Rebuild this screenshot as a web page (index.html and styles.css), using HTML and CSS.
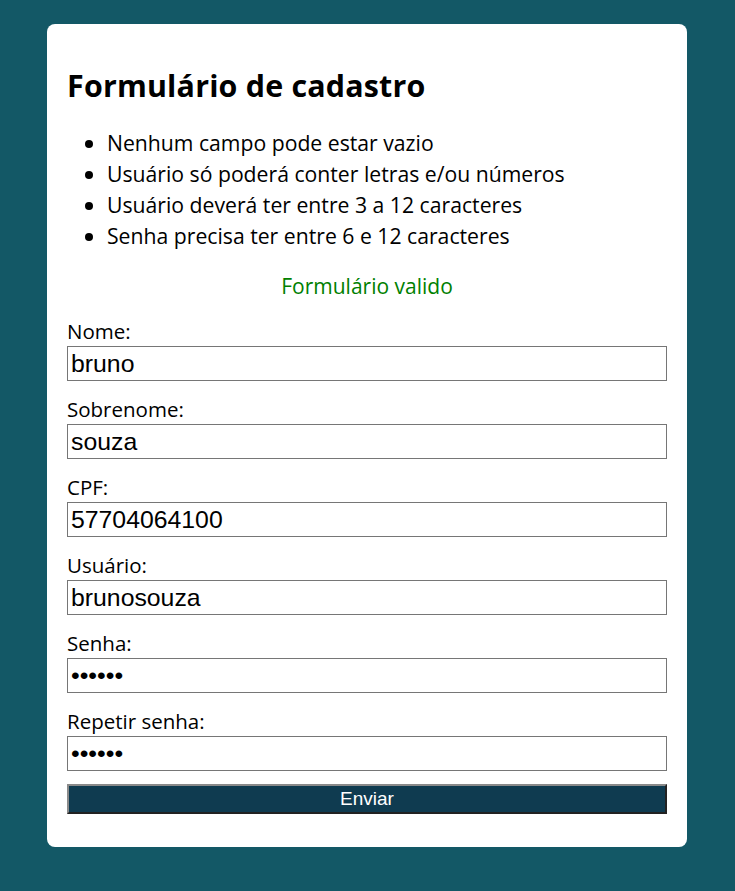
FILE: index.html
```html
<!DOCTYPE html>
<html lang="pt-BR">
<head>
<meta charset="utf-8">
<title>Formulário de cadastro</title>
<link rel="stylesheet" href="styles.css">
</head>
<body>
<main class="card">
  <h1 class="title">Formulário de cadastro</h1>
  <ul class="rules">
    <li>Nenhum campo pode estar vazio</li>
    <li>Usuário só poderá conter letras e/ou números</li>
    <li>Usuário deverá ter entre 3 a 12 caracteres</li>
    <li>Senha precisa ter entre 6 e 12 caracteres</li>
  </ul>
  <p class="status">Formulário valido</p>
  <form class="form">
    <div class="field">
      <label for="nome">Nome:</label>
      <input id="nome" type="text" value="bruno">
    </div>
    <div class="field">
      <label for="sobrenome">Sobrenome:</label>
      <input id="sobrenome" type="text" value="souza">
    </div>
    <div class="field">
      <label for="cpf">CPF:</label>
      <input id="cpf" type="text" value="57704064100">
    </div>
    <div class="field">
      <label for="usuario">Usuário:</label>
      <input id="usuario" type="text" value="brunosouza">
    </div>
    <div class="field">
      <label for="senha">Senha:</label>
      <input id="senha" type="password" value="123456">
    </div>
    <div class="field">
      <label for="senha2">Repetir senha:</label>
      <input id="senha2" type="password" value="123456">
    </div>
    <button type="button" class="submit">Enviar</button>
  </form>
</main>
</body>
</html>
```
FILE: styles.css
```css
html, body {
  margin: 0;
  padding: 0;
}
body {
  background: #135866;
  font-family: "Open Sans", "Noto Sans", sans-serif;
  color: #000;
  padding: 24px 48px 45px 47px;
}
.card {
  background: #fff;
  border-radius: 8px;
  padding: 28px 20px 33px;
}
.title {
  font-size: 30.4px;
  font-weight: 700;
  margin: 15px 0 22px;
  line-height: 38px;
  letter-spacing: 0.2px;
}
.rules {
  margin: 0;
  padding-left: 40px;
  font-size: 21.2px;
  line-height: 31px;
}
.status {
  text-align: center;
  color: #008000;
  font-size: 21px;
  line-height: 27px;
  margin: 22px 0 18px;
}
.form {
  display: flex;
  flex-direction: column;
}
.field {
  display: flex;
  flex-direction: column;
  margin-bottom: 15px;
}
.field label {
  font-size: 20.5px;
  line-height: 27px;
  margin-bottom: 1px;
}
.field input {
  box-sizing: border-box;
  width: 100%;
  height: 35px;
  border: 1px solid #767676;
  padding: 1px 3px;
  font-family: "Liberation Sans", Arial, sans-serif;
  font-size: 24.8px;
  color: #000;
  margin: 0;
}
.submit {
  box-sizing: border-box;
  width: 100%;
  height: 30px;
  margin-top: -2px;
  background: #0f3b50;
  color: #fff;
  font-family: "Liberation Sans", Arial, sans-serif;
  font-size: 19px;
  border: 2px solid;
  border-top-color: #8a8a8a;
  border-left-color: #8a8a8a;
  border-right-color: #222;
  border-bottom-color: #222;
  padding: 0;
}
```
